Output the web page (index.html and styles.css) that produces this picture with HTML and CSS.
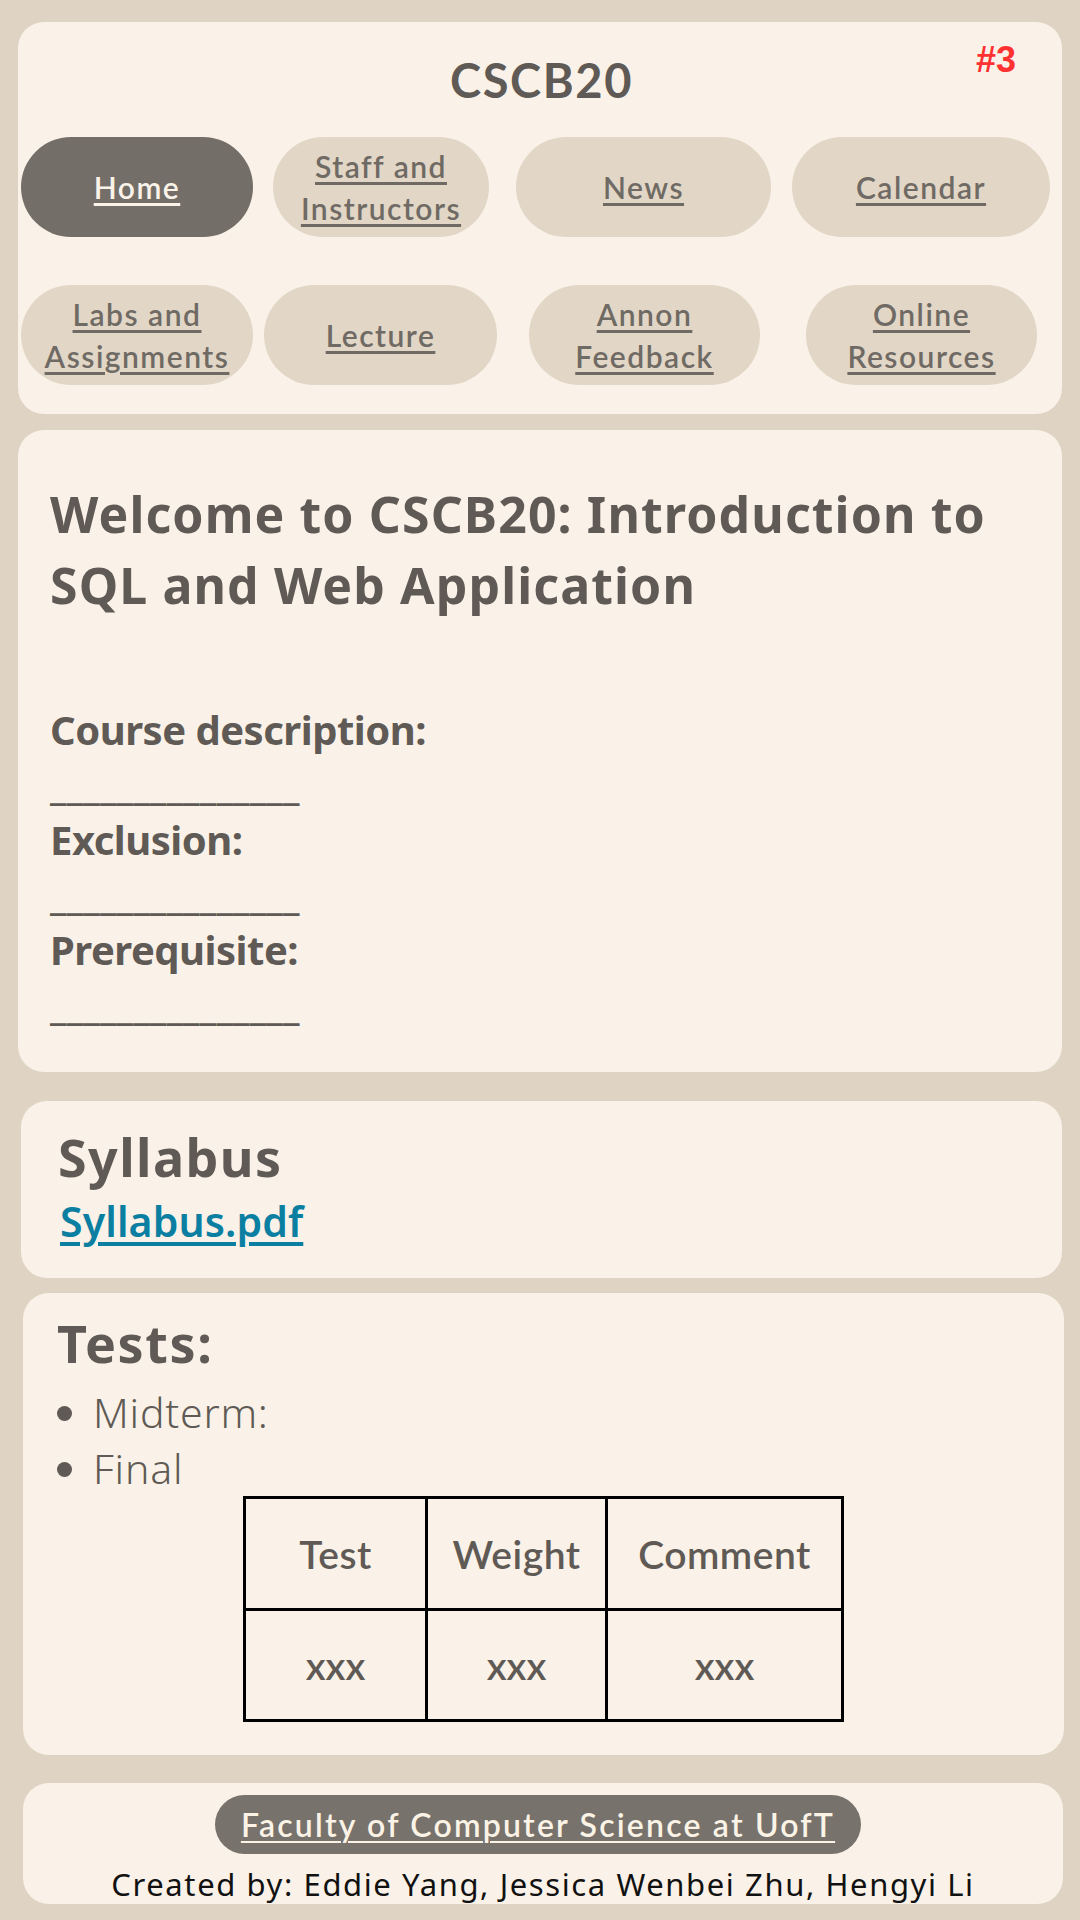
FILE: index.html
```html
<!DOCTYPE html>
<html lang="en">
<head>
<meta charset="utf-8">
<title>CSCB20</title>
<link rel="stylesheet" href="styles.css">
</head>
<body>
<div class="page">
  <header class="card header-card">
    <span class="badge">#3</span>
    <div class="site-title">CSCB20</div>
    <nav class="nav">
      <div class="nav-row">
        <a class="pill pill-active w-home" href="#">Home</a>
        <a class="pill w-staff" href="#">Staff and<br>Instructors</a>
        <a class="pill w-news" href="#">News</a>
        <a class="pill w-cal" href="#">Calendar</a>
      </div>
      <div class="nav-row">
        <a class="pill w-labs" href="#">Labs and<br>Assignments</a>
        <a class="pill w-lect" href="#">Lecture</a>
        <a class="pill w-annon" href="#">Annon<br>Feedback</a>
        <a class="pill w-online" href="#">Online<br>Resources</a>
      </div>
    </nav>
  </header>

  <section class="card welcome-card">
    <h1 class="welcome-title">Welcome to CSCB20: Introduction to SQL and Web Application</h1>
    <div class="info">
      <div>Course description:</div>
      <div class="blank">_______________</div>
      <div>Exclusion:</div>
      <div class="blank">_______________</div>
      <div>Prerequisite:</div>
      <div class="blank">_______________</div>
    </div>
  </section>

  <section class="card syllabus-card">
    <h2 class="section-title">Syllabus</h2>
    <a class="file-link" href="#">Syllabus.pdf</a>
  </section>

  <section class="card tests-card">
    <h2 class="section-title">Tests:</h2>
    <ul class="test-list">
      <li>Midterm:</li>
      <li>Final</li>
    </ul>
    <table class="test-table">
      <tr>
        <th class="col-test">Test</th>
        <th class="col-weight">Weight</th>
        <th class="col-comment">Comment</th>
      </tr>
      <tr>
        <td>xxx</td>
        <td>xxx</td>
        <td>xxx</td>
      </tr>
    </table>
  </section>

  <footer class="card footer-card">
    <a class="footer-pill" href="#">Faculty of Computer Science at UofT</a>
    <div class="credits">Created by: Eddie Yang, Jessica Wenbei Zhu, Hengyi Li</div>
  </footer>
</div>
</body>
</html>
```

FILE: styles.css
```css
html, body {
  margin: 0;
  padding: 0;
}

body {
  background: #dfd3c3;
  font-family: "Noto Sans", "Open Sans", sans-serif;
  color: #5f5a55;
  width: 1080px;
  height: 1920px;
  overflow: hidden;
}

.page {
  display: flex;
  flex-direction: column;
  padding: 22px 18px 0 18px;
}

.card {
  background: #faf2e8;
  border-radius: 26px;
}

/* header */
.header-card {
  position: relative;
  padding: 30px 0 29px 3px;
  margin-bottom: 16px;
}

.badge {
  position: absolute;
  top: 20px;
  right: 46px;
  font-family: "Liberation Sans", Arial, sans-serif;
  font-weight: 700;
  font-size: 36px;
  line-height: 36px;
  color: #ff3131;
}

.site-title {
  text-align: center;
  font-family: "Lato", sans-serif;
  font-weight: 700;
  font-size: 47px;
  line-height: 56px;
  letter-spacing: 1.6px;
  color: #5f5a55;
  margin-bottom: 29px;
}

.nav {
  display: flex;
  flex-direction: column;
  gap: 48px;
}

.nav-row {
  display: flex;
}

.pill {
  height: 100px;
  border-radius: 50px;
  background: #e2d6c6;
  color: #6f6a64;
  display: flex;
  align-items: center;
  justify-content: center;
  text-align: center;
  font-family: "Lato", sans-serif;
  font-weight: 600;
  font-size: 30px;
  line-height: 42px;
  text-decoration: underline;
  text-decoration-thickness: 3px;
  text-underline-offset: 4px;
  letter-spacing: 1.5px;
}

.pill-active {
  background: #736e68;
  color: #fbf3e8;
}

.w-home { width: 232px; }
.w-staff { width: 216px; margin-left: 20px; }
.w-news { width: 255px; margin-left: 27px; }
.w-cal { width: 258px; margin-left: 21px; }
.w-labs { width: 232px; }
.w-lect { width: 233px; margin-left: 11px; }
.w-annon { width: 231px; margin-left: 32px; }
.w-online { width: 231px; margin-left: 46px; }

/* welcome */
.welcome-card {
  padding: 49px 40px 40px 32px;
  margin-bottom: 29px;
}

.welcome-title {
  margin: 0;
  font-size: 50px;
  font-weight: 700;
  line-height: 71px;
  letter-spacing: 1.1px;
  color: #5f5a55;
}

.info {
  margin-top: 81px;
  font-size: 40px;
  font-weight: 700;
  line-height: 55px;
  letter-spacing: -0.5px;
}

.blank {
  letter-spacing: 0.2px;
}

/* syllabus */
.syllabus-card {
  margin-left: 3px;
  padding: 22px 36px 25px 37px;
  margin-bottom: 15px;
  display: flex;
  flex-direction: column;
  align-items: flex-start;
}

.section-title {
  margin: 0;
  font-size: 52px;
  font-weight: 700;
  line-height: 67px;
  letter-spacing: 1.4px;
  color: #5f5a55;
}

.file-link {
  font-size: 41px;
  font-weight: 600;
  line-height: 63px;
  letter-spacing: 0.1px;
  color: #0a7fa2;
  text-decoration: underline;
  text-decoration-thickness: 4px;
  text-underline-offset: 5px;
  margin-left: 2px;
}

/* tests */
.tests-card {
  margin-left: 5px;
  margin-right: -2px;
  padding: 16px 34px 33px 34px;
}

.tests-card .section-title {
  letter-spacing: 1.6px;
}

.test-list {
  margin: 8px 0 0 0;
  padding-left: 36px;
  font-size: 41px;
  font-weight: 300;
  line-height: 56px;
  letter-spacing: 0.8px;
  color: #5f5a55;
}

.test-table {
  border-collapse: collapse;
  margin: 0 auto;
  font-family: "Lato", sans-serif;
  font-weight: 600;
  color: #5f5a55;
}

.test-table th,
.test-table td {
  border: 3px solid #000;
  padding: 0;
  text-align: center;
  font-size: 39px;
}

.test-table th {
  height: 109px;
  font-weight: 600;
  letter-spacing: 0.5px;
}

.test-table td {
  height: 108px;
}

.col-test { width: 179px; }
.col-weight { width: 177px; }
.col-comment { width: 233px; }

/* footer */
.footer-card {
  margin-top: 28px;
  margin-left: 5px;
  margin-right: -1px;
  height: 121px;
  box-sizing: border-box;
  padding-top: 12px;
  overflow: hidden;
  display: flex;
  flex-direction: column;
  align-items: center;
}

.footer-pill {
  display: flex;
  align-items: center;
  justify-content: center;
  width: 646px;
  height: 62px;
  margin-right: 10px;
  border-radius: 31px;
  background: #77726c;
  color: #fbf3e6;
  font-family: "Lato", sans-serif;
  font-weight: 600;
  font-size: 32px;
  letter-spacing: 2.2px;
  text-decoration: underline;
  text-decoration-thickness: 2px;
  text-underline-offset: 4px;
}

.credits {
  margin-top: 10px;
  font-size: 31px;
  line-height: 40px;
  color: #111111;
  letter-spacing: 1.6px;
}
```
